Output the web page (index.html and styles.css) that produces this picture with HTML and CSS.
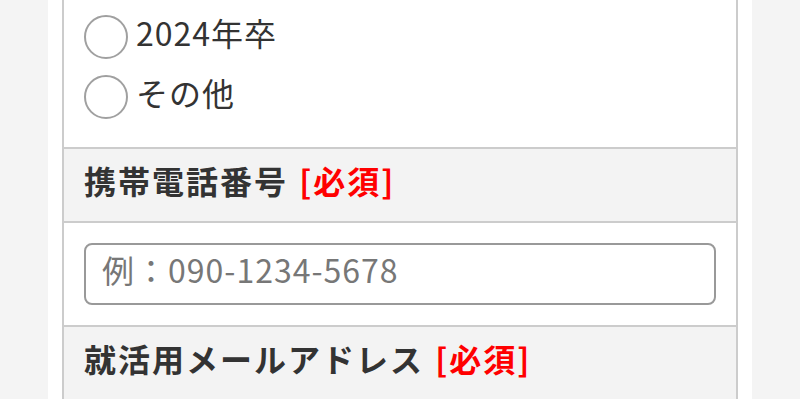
FILE: index.html
```html
<!DOCTYPE html>
<html lang="ja">
<head>
<meta charset="utf-8">
<link rel="stylesheet" href="styles.css">
</head>
<body>
<div class="page">
  <div class="form">
    <div class="cell radios">
      <label class="radio"><input type="radio" name="grad"><span>2024年卒</span></label>
      <label class="radio"><input type="radio" name="grad"><span>その他</span></label>
    </div>
    <div class="head">携帯電話番号 <span class="req">[必須]</span></div>
    <div class="cell field">
      <input class="text" type="tel" placeholder="例：090-1234-5678">
    </div>
    <div class="head">就活用メールアドレス <span class="req">[必須]</span></div>
    <div class="cell field">
      <input class="text" type="email" placeholder="例：example@mail.com">
    </div>
  </div>
</div>
</body>
</html>
```

FILE: styles.css
```css
html, body {
  margin: 0;
  padding: 0;
  background: #f4f4f4;
  font-family: "Noto Sans CJK JP", "Noto Sans", sans-serif;
  color: #333;
}
.page {
  width: 704px;
  margin: 0 auto;
  background: #fff;
  padding: 0 14px;
  box-sizing: border-box;
  height: 399px;
  overflow: hidden;
}
.form {
  border-left: 2px solid #ccc;
  border-right: 2px solid #ccc;
}
.radios {
  padding: 15px 20px 28px;
  display: flex;
  flex-direction: column;
  gap: 16px;
}
.radio {
  display: flex;
  align-items: center;
  gap: 8px;
  height: 44px;
  font-size: 32px;
  letter-spacing: 1px;
}
.radio span {
  line-height: 44px;
  margin-top: -10px;
}
.radio input {
  appearance: none;
  -webkit-appearance: none;
  margin: 0;
  width: 44px;
  height: 44px;
  border: 2px solid #a0a0a0;
  border-radius: 50%;
  box-sizing: border-box;
  background: #fff;
  flex: none;
}
.head {
  border-top: 2px solid #ccc;
  background: #f3f3f3;
  height: 74px;
  box-sizing: border-box;
  padding: 0 20px 10px;
  display: flex;
  align-items: center;
  font-size: 32px;
  letter-spacing: 2px;
  font-weight: bold;
  white-space: pre;
}
.req {
  color: #f00;
  margin-left: 2px;
}
.field {
  border-top: 2px solid #ccc;
  padding: 20px;
}
.text {
  display: block;
  width: 100%;
  height: 62px;
  box-sizing: border-box;
  border: 2px solid #999;
  border-radius: 8px;
  padding: 0 16px 10px;
  font-family: inherit;
  font-size: 32px;
  letter-spacing: 1px;
  color: #333;
  background: #fff;
  outline: none;
}
.text::placeholder {
  color: #777;
}
```
